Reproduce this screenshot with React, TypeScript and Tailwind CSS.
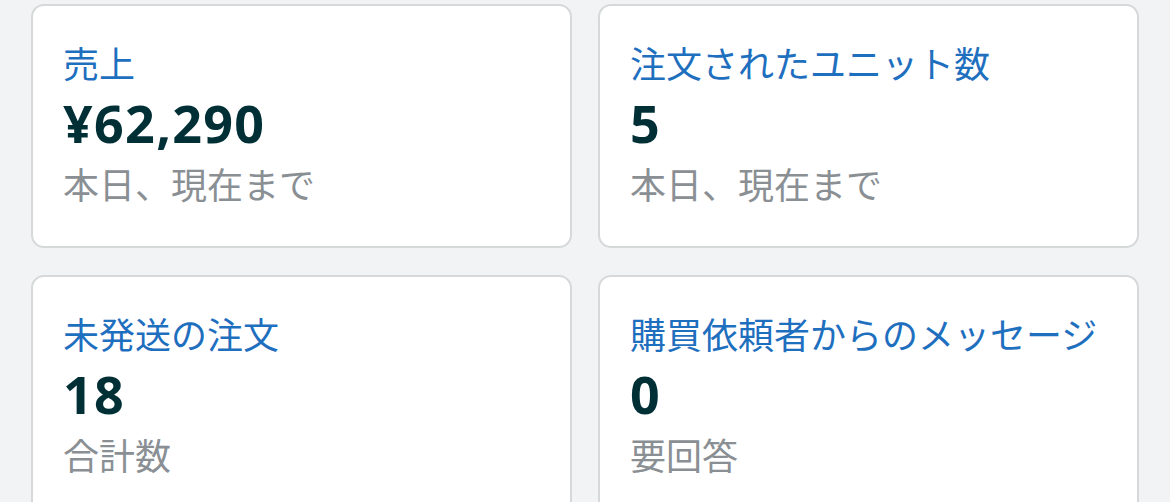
import React from "react";

interface Stat {
  id: number;
  title: string;
  value: string;
  note: string;
}

const stats: Stat[] = [
  { id: 1, title: "売上", value: "¥62,290", note: "本日、現在まで" },
  { id: 2, title: "注文されたユニット数", value: "5", note: "本日、現在まで" },
  { id: 3, title: "未発送の注文", value: "18", note: "合計数" },
  { id: 4, title: "購買依頼者からのメッセージ", value: "0", note: "要回答" },
];

const StatCard = ({ stat }: { stat: Stat }) => {
  return (
    <div className="rounded-[13px] border-2 border-[#d5d9d9] bg-white px-[30px] pt-[39px] pb-[40px]">
      <div className="text-[36px] leading-[40px] text-[#1f6fbf] whitespace-nowrap">
        {stat.title}
      </div>
      <div className="mt-[8px] text-[52px] leading-[60px] font-bold tracking-[1.3px] text-[#002f36]">
        {stat.value}
      </div>
      <div className="mt-[13px] text-[36px] leading-[40px] text-[#8a8f94]">
        {stat.note}
      </div>
    </div>
  );
};

export default function App() {
  return (
    <div
      className="min-h-screen bg-[#f2f3f4] px-[31px] pt-[4px]"
      style={{ fontFamily: '"Noto Sans", "Noto Sans CJK JP", sans-serif' }}
    >
      <div className="grid grid-cols-2 gap-x-[26px] gap-y-[27px]">
        {stats.map((s) => (
          <StatCard key={s.id} stat={s} />
        ))}
      </div>
    </div>
  );
}
